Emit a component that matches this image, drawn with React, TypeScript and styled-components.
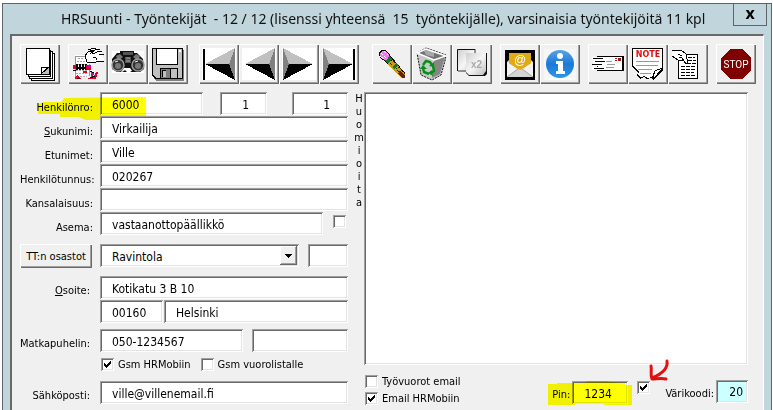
import React, { useId } from "react";
import type { ReactNode } from "react";
import styled, { createGlobalStyle } from "styled-components";

const GlobalStyle = createGlobalStyle`
  * { box-sizing: border-box; }
  body { margin: 0; background: #fff; }
`;

const formFont = `"DejaVu Sans Condensed", "DejaVu Sans", sans-serif`;
const sunken = `inset 1px 1px #a0a0a0, inset -1px -1px #fff, inset 2px 2px #696969, inset -2px -2px #e3e3e3`;
const raised = `inset 1px 1px #fff, inset -1px -1px #696969, inset -2px -2px #a0a0a0`;

const Window = styled.main`
  display: flex;
  flex-direction: column;
  min-height: calc(100vh - 3px);
  margin: 3px 1px 0 2px;
  padding: 0 7px;
  background: #c1d5dc;
  border: 1px solid #5f666b;
  border-bottom: 0;
  font-family: ${formFont};
  font-size: 12px;
  color: #000;
`;

const TitleBar = styled.header`
  display: flex;
  align-items: flex-start;
  height: 30px;
  padding-left: 51px;
`;

const Title = styled.h1`
  flex: 1;
  min-width: 0;
  margin: 0;
  font: 400 14px/30px "Noto Sans", sans-serif;
  color: #111;
  white-space: pre;
`;

const CloseButton = styled.button`
  flex: none;
  width: 34px;
  height: 22px;
  margin-right: -3px;
  padding: 0 0 4px;
  border: 1px solid #5f666b;
  border-top: 0;
  background: transparent;
  font: 700 16px/16px "Open Sans", sans-serif;
`;

const Client = styled.div`
  flex: 1;
  display: flex;
  flex-direction: column;
  gap: 8px;
  padding: 8px 15px 6px 8px;
  background: #f0f0f0;
  border: solid #696969;
  border-width: 2px 0 0 2px;
  border-right: 1px solid #fff;
`;

const Toolbar = styled.nav`
  display: flex;
`;

const ToolGroup = styled.div<{ $before?: number }>`
  display: flex;
  margin-left: ${(p) => p.$before ?? 0}px;
`;

const ToolButton = styled.button`
  width: 40px;
  height: 40px;
  padding: 0;
  border: 0;
  background: #f0f0f0;
  box-shadow: ${raised};
  svg { display: block; }
`;

const Columns = styled.div`
  flex: 1;
  display: flex;
`;

const Form = styled.form`
  display: flex;
  flex-direction: column;
  gap: 1px;
  width: 328px;
`;

const Row = styled.div<{ $before?: number }>`
  position: relative;
  display: flex;
  height: 23px;
  margin-top: ${(p) => p.$before ?? 0}px;
`;

const RowLabel = styled.label<{ $inset?: boolean }>`
  width: 80px;
  padding: ${(p) => (p.$inset ? "7px 10px" : "8px 7px")} 0 0;
  font-size: 11px;
  line-height: 16px;
  text-align: right;
  white-space: nowrap;
`;

const Field = styled.input<{ $width?: number; $before?: number; $align?: string; $tint?: string }>`
  flex: ${(p) => (p.$width ? `0 0 ${p.$width}px` : "1 1 0")};
  min-width: 0;
  height: 23px;
  margin: 0 0 0 ${(p) => p.$before ?? 0}px;
  padding: 4px ${(p) => (p.$align ? 18 : 4)}px 2px 12px;
  border: 0;
  border-radius: 0;
  background: ${(p) => p.$tint ?? "#fff"};
  box-shadow: ${sunken};
  font: 12px/16px ${formFont};
  text-align: ${(p) => p.$align ?? "left"};
`;

const CodeField = styled(Field)`
  padding: 3px 5px 2px;
`;

const DepartmentButton = styled.button`
  width: 72px;
  height: 24px;
  margin-right: 8px;
  padding: 2px 0 0;
  border: 0;
  background: #f0f0f0;
  box-shadow: ${raised};
  font: 11px/16px ${formFont};
  white-space: nowrap;
`;

const SelectBox = styled.div`
  display: grid;
  width: 199px;
  margin-right: 9px;
  > * { grid-area: 1 / 1; }
  svg { justify-self: end; margin: 2px; pointer-events: none; }
`;

const Select = styled.select`
  appearance: none;
  height: 23px;
  padding: 4px 20px 2px 12px;
  border: 0;
  border-radius: 0;
  background: #fff;
  box-shadow: ${sunken};
  font: 12px/16px ${formFont};
`;

const CheckLabel = styled.label`
  display: flex;
  gap: 4px;
  font-size: 11px;
  line-height: 14px;
  white-space: nowrap;
`;

const CheckFrame = styled.span`
  display: grid;
  width: 13px;
  height: 13px;
  > * { grid-area: 1 / 1; }
  svg { pointer-events: none; }
`;

const CheckInput = styled.input`
  appearance: none;
  width: 13px;
  height: 13px;
  margin: 0;
  background: #fff;
  box-shadow: ${sunken};
  & + svg { visibility: hidden; }
  &:checked + svg { visibility: visible; }
`;

const CheckRow = styled.div`
  display: flex;
  gap: 10px;
  margin: 5px 0 8px 81px;
`;

const LoneCheck = styled.div<{ $x: number; $y: number }>`
  padding: ${(p) => p.$y}px 0 0 ${(p) => p.$x}px;
`;

const NotesLabel = styled.label`
  width: 16px;
  padding-left: 6px;
  font: 11px/13px "DejaVu Sans Condensed", sans-serif;
  text-align: center;
  span { display: block; }
`;

const RightPane = styled.section`
  flex: 1;
  display: flex;
  flex-direction: column;
  gap: 10px;
`;

const Notes = styled.textarea`
  flex: 1;
  width: 100%;
  padding: 6px;
  border: 0;
  background: #fff;
  box-shadow: ${sunken};
  resize: none;
  font: 12px/16px ${formFont};
`;

const Footer = styled.div`
  display: flex;
  align-items: flex-start;
  height: 29px;
`;

const CheckStack = styled.div`
  display: flex;
  flex-direction: column;
  gap: 3px;
  margin: 0 auto 0 1px;
`;

const PinGroup = styled.div`
  position: relative;
  display: flex;
  padding-top: 6px;
`;

const FooterLabel = styled.label`
  padding: 6px 2px 0 0;
  font-size: 11px;
  line-height: 16px;
`;

const ColorGroup = styled.div`
  display: flex;
  padding: 5px 0 0 15px;
`;

/* Marker strokes drawn over the form */
const Marker = styled.svg<{ $left: number; $top: number }>`
  position: absolute;
  left: ${(p) => p.$left}px;
  top: ${(p) => p.$top}px;
  mix-blend-mode: multiply;
  pointer-events: none;
`;

function Icon({ children, crisp = true }: { children: ReactNode; crisp?: boolean }) {
  return (
    <svg width="40" height="40" viewBox="0 0 40 40" shapeRendering={crisp ? "crispEdges" : "auto"} aria-hidden="true">
      {children}
    </svg>
  );
}

function Check({ label, checked, name }: { label?: string; checked?: boolean; name: string }) {
  return (
    <CheckLabel>
      <CheckFrame>
        <CheckInput type="checkbox" defaultChecked={checked} aria-label={name} />
        <svg width="13" height="13" viewBox="0 0 13 13" shapeRendering="crispEdges">
          <path d="M3 5h1v1h1v1h1v-1h1v-1h1v-1h1v-1h1v3h-1v1h-1v1h-1v1h-1v1h-1v-1h-1v-1h-1z" />
        </svg>
      </CheckFrame>
      {label}
    </CheckLabel>
  );
}

const NewIcon = () => (
  <Icon>
    <path d="M11 9h24v28H11zM9 7h24v28H9z" fill="#000" />
    <path d="M10 8h22v26H10zM33 10h1v26H12v-1h21z" fill="#fff" />
    <path d="M8 6h23v27H8z" fill="#000" />
    <path d="M9 7h21v25H9z" fill="#fff" />
    <path d="M6 4h24v27H6z" fill="#000" />
    <path d="M7 5h22v25H7z" fill="#fff" />
    <path d="M21 23h8v7h-8z" fill="#c0c0c0" />
    <path d="M21 23h8l-8 7z" fill="#fff" />
    <path d="M21 30v-7h8M21 30l8-7" fill="none" stroke="#000" />
  </Icon>
);

const BindIcon = () => (
  <Icon>
    <path d="M7 11h15v10l-2 12H6z" fill="#fff" />
    <path d="M7 33V12h11M21 20v12" fill="none" stroke="#999" />
    <path d="M10 14h5M9 17h8M9 20h9M8 26h11M8 29h11M9 32h10" stroke="#aaa" strokeDasharray="2 1" />
    <path d="M16 13l3-3 1-3 4-1 4-2 4 1 2 3 2 8-4 2h-8l-4 1-4-2z" fill="#fff" />
    <path d="M17 12l3-4 5-2 1 1-4 3M20 6l6-2 2 1M22 8l8-3 2 1M24 10l8-3 2 1M17 12l2 6 5 1 4-1 8-1M25 13l3 1 1 2M31 10h5" fill="none" stroke="#000" />
    <path d="M6 24h14M9 20v6M12 20v6M15 20v6M18 20v6" stroke="#000" strokeWidth="1.5" />
    <path d="M5 21h3v4H5zM18 21h5v5h-5zM6 34l4-3 3 4h-6zM19 35l7-3 2-4h2l-2 7zM15 27h4v2h-4z" fill="#e40020" />
    <path d="M20 21h3v3h-3zM23 28l4 2-4 3z" fill="#d000b8" />
    <path d="M5 26l3 1M9 34h3M22 34l5-2M22 27l4 2" stroke="#000" />
  </Icon>
);

const SearchIcon = () => (
  <Icon crisp={false}>
    <path d="M4 7h32v22H4z" fill="#fff" shapeRendering="crispEdges" />
    <path d="M4 15l5-6h3V7h14v2h3l6 6 1 10-4 3h-7l-3-4h-6l-3 4H9l-5-3z" fill="#111" />
    <path d="M8 12l4-2 3 3-5 4zM32 12l-4-2-3 3 5 4z" fill="#777" />
    <path d="M15 8h10v3H15zM17 13h6v6h-6z" fill="#555" />
    <path d="M18 14h4M18 17h4" stroke="#aaa" />
    <circle cx="10" cy="21" r="6" fill="#333" stroke="#999" strokeWidth="1.5" />
    <circle cx="30" cy="21" r="6" fill="#333" stroke="#999" strokeWidth="1.5" />
    <circle cx="10" cy="22" r="3" fill="#777" />
    <circle cx="30" cy="22" r="3" fill="#777" />
    <path d="M7 18l3-1M27 18l3-1" stroke="#eee" />
    <path d="M14 28l3-2 2 2zM22 28l3-2 2 2z" fill="#111" />
  </Icon>
);

const SaveIcon = () => (
  <Icon>
    <path d="M6 6h30v31H8l-2-2z" fill="#808080" />
    <path d="M4 4h31v31H7l-3-3z" fill="#000" />
    <path d="M5 5h29v29H8l-3-3z" fill="#c0c0c0" />
    <path d="M8 4h22v17H8z" fill="#000" />
    <path d="M9 5h20v15H9zM31 6h2v2h-2z" fill="#fff" />
    <path d="M12 24h18v10H12z" fill="#000" />
    <path d="M13 25h9v9h-9z" fill="#808080" />
    <path d="M14 26h4v7h-4z" fill="#000" />
    <path d="M15 27h3v6h-3zM23 25h6v9h-6z" fill="#c0c0c0" />
  </Icon>
);

function ArrowIcon({ right, end }: { right?: boolean; end?: boolean }) {
  return (
    <Icon>
      <path d="M3 4h34v32H3z" fill="#fff" />
      {right ? (
        <>
          <path d="M4 4l30 16-24 1z" fill="#c0c0c0" />
          <path d="M4 36l30-16H10z" fill="#000" />
          <path d="M4 4l6 16-6 16z" fill="#808080" />
        </>
      ) : (
        <>
          <path d="M36 4L6 20l24 1z" fill="#c0c0c0" />
          <path d="M36 36L6 20h24z" fill="#000" />
          <path d="M36 4l-6 16 6 16z" fill="#808080" />
        </>
      )}
      {end && <path d={right ? "M34 5h2v31h-2z" : "M4 5h2v31H4z"} fill="#000" />}
    </Icon>
  );
}

const EraserIcon = () => (
  <Icon>
    <path d="M7 9l2-3h4l5 5 15 18v5h-4L13 17l-5-3z" fill="#000" />
    <path d="M18 17l3-1 12 14v4h-4L16 20z" fill="#c89a1c" />
    <path d="M18 19l14 13M21 17l12 13" stroke="#3c2808" strokeDasharray="1 1" />
    <path d="M28 27l5 5v2h-3l-4-5z" fill="#6a1c08" />
    <path d="M13 17l4-5 3 3-4 5zM20 23l4-4 2 2-4 4z" fill="#167a24" />
    <path d="M8 9l2-2h3l4 4-1 4-3 1-4-2z" fill="#f07cf0" />
    <path d="M9 9l5 5M12 7l4 4M8 12l4 3" stroke="#fff" strokeDasharray="1 1" />
  </Icon>
);

const TrashIcon = () => (
  <Icon crisp={false}>
    <path d="M5 9l9-5 20 7-1 6-4 14-9 5-11-5z" fill="#c8c8c8" stroke="#111" strokeWidth="1" strokeDasharray="2 1" />
    <path d="M6 9l8-4 19 7-11 4z" fill="#747474" />
    <path d="M12 7l3-2 7 3v5l-8-2z" fill="#a8a8a8" />
    <path d="M5 9l9-4 20 7-12 4z" fill="none" stroke="#fff" strokeWidth="1.5" />
    <path d="M22 17l11-4-5 17-8 4z" fill="#858585" />
    <path d="M11 21l3-4 4 1 2 3M21 22l1 5-3 2M17 30l-5-2-1-4" fill="none" stroke="#079018" strokeWidth="2.5" />
    <path d="M17 22l5 1V18zM20 26l-4 3 5 3zM8 25l3-4 4 4z" fill="#079018" />
  </Icon>
);

const CopyIcon = () => (
  <Icon crisp={false}>
    <defs>
      <linearGradient id="sheet" x1="0" y1="0" x2="1" y2="1">
        <stop offset="0" stopColor="#cfcfcf" />
        <stop offset="0.5" stopColor="#f6f6f6" />
        <stop offset="1" stopColor="#bdbdbd" />
      </linearGradient>
    </defs>
    <path d="M6 6h17v22H6z" fill="url(#sheet)" />
    <path d="M5.500 27V5.500H23" fill="none" stroke="#111" />
    <path d="M6 27h8M23 5v5" stroke="#333" />
    <path d="M15 9h20v21l-2 2H17l-3-3z" fill="#111" />
    <path d="M14 9h20v18l-3 4H17l-3-3z" fill="url(#sheet)" />
    <text x="19" y="24" fontSize="10" fontFamily="Liberation Sans, sans-serif" fontWeight="700" fill="#aaa">x2</text>
  </Icon>
);

const MailIcon = () => (
  <Icon crisp={false}>
    <path d="M5 6h30v30H5z" fill="#000" shapeRendering="crispEdges" />
    <path d="M7 18l6-6h14l6 6v15H7z" fill="#e4e4e4" />
    <path d="M9 9h22v10l-11 8-11-8z" fill="#e5b31b" />
    <path d="M9 9h22v4H9z" fill="#f2c93c" />
    <path d="M7 18l13 9 13-9v15H7z" fill="#f2f2f2" />
    <path d="M7 33l11-9h4l11 9z" fill="#d5d5d5" />
    <path d="M9 19l11 7 11-7V9H9z" fill="#dfaa14" />
    <path d="M7 33l11-8M33 33l-11-8" stroke="#aaa" />
    <text x="20" y="20" textAnchor="middle" fontSize="12" fontFamily="Liberation Sans, sans-serif" fill="#fff">@</text>
  </Icon>
);

const InfoIcon = () => (
  <Icon crisp={false}>
    <defs>
      <linearGradient id="ball" x1="0" y1="0" x2="0" y2="1">
        <stop offset="0" stopColor="#57a4e8" />
        <stop offset="0.5" stopColor="#1d78d6" />
        <stop offset="1" stopColor="#2b97f0" />
      </linearGradient>
    </defs>
    <path d="M4 5h32v31H4z" fill="#f6f6f6" />
    <ellipse cx="20" cy="35" rx="15" ry="1" fill="#fff" />
    <circle cx="20" cy="20" r="14" fill="url(#ball)" />
    <circle cx="20" cy="12" r="3" fill="#fff" />
    <path d="M16 17h7v10h2v3h-9v-3h2v-7h-2z" fill="#fff" />
  </Icon>
);

const LetterIcon = () => (
  <Icon>
    <path d="M9 12h27v15H9z" fill="#000" />
    <path d="M10 13h24v13H10z" fill="#fff" />
    <path d="M4 14.500h10M6 17.500h12M5 20.500h10M4 24.500h12" stroke="#fff" strokeWidth="3" />
    <path d="M5 14.500h10M7 17.500h10M4 20.500h10M6 24.500h10" stroke="#000" />
    <path d="M18 17.500h6M19 20.500h8M18 23.500h8" stroke="#999" />
    <path d="M27 14h2v1h-2zM30 14h3v3h-3zM27 16h2v1h-2z" fill="#a01818" />
  </Icon>
);

const NoteIcon = () => (
  <Icon>
    <path d="M4 4h31v22l-9 10-3-2-4 1-3-2-4 2-3-3 1-4-6-5z" fill="#000" />
    <path d="M5 5h29v19l-7 2-3 7-4 1-4-2-3 1-3-2 1-3-6-6z" fill="#fff" />
    <path d="M8 17.500h23M8 21.500h22M10 25.500h14M12 29.500h11" stroke="#999" />
    <path d="M27 27l6-2-7 9z" fill="#fff" />
    <text x="20" y="13" textAnchor="middle" fontSize="8" fontFamily="DejaVu Sans, sans-serif" fontWeight="700" fill="#e01010">NOTE</text>
  </Icon>
);

const DocumentIcon = () => (
  <Icon>
    <path d="M10.500 10.500h19v24h-19z" fill="#fff" stroke="#000" />
    <path d="M20 13.500h7M20 16.500h8M19 19.500h9M13 22.500h14M13 25.500h15M13 28.500h13M13 31.500h14" stroke="#000" strokeDasharray="4 1" />
    <path d="M4 6h10l5 5 1 8-2 2-4-6-3 1-7-4z" fill="#fff" />
    <path d="M4 6h9l5 4 2 9-2 1-4-6-3-1M4 12l6 4h5M10 10l4 2" fill="none" stroke="#000" />
  </Icon>
);

const StopIcon = () => (
  <Icon>
    <path d="M14 5h12l9 9v12l-9 9H14l-9-9V14z" fill="#800000" />
    <text x="20" y="24" textAnchor="middle" fontSize="10" fontFamily="Roboto, sans-serif" fill="#fff">STOP</text>
  </Icon>
);

const toolGroups: { before: number; tools: [string, ReactNode][] }[] = [
  { before: 0, tools: [["Uusi", <NewIcon />]] },
  { before: 8, tools: [["Kortisto", <BindIcon />], ["Etsi", <SearchIcon />], ["Tallenna", <SaveIcon />]] },
  {
    before: 11,
    tools: [
      ["Ensimmäinen", <ArrowIcon end />],
      ["Edellinen", <ArrowIcon />],
      ["Seuraava", <ArrowIcon right />],
      ["Viimeinen", <ArrowIcon right end />],
    ],
  },
  { before: 13, tools: [["Tyhjennä", <EraserIcon />], ["Poista", <TrashIcon />], ["Kopioi", <CopyIcon />]] },
  { before: 8, tools: [["Sähköposti", <MailIcon />], ["Tietoja", <InfoIcon />]] },
  { before: 8, tools: [["Kirje", <LetterIcon />], ["Muistio", <NoteIcon />], ["Asiakirja", <DocumentIcon />]] },
  { before: 8, tools: [["Lopeta", <StopIcon />]] },
];

export default function App() {
  const id = useId();
  return (
    <>
      <GlobalStyle />
      <Window>
        <TitleBar>
          <Title>{"HRSuunti - Työntekijät  - 12 / 12 (lisenssi yhteensä  15  työntekijälle), varsinaisia työntekijöitä 11 kpl"}</Title>
          <CloseButton aria-label="Sulje">x</CloseButton>
        </TitleBar>
        <Client>
          <Toolbar>
            {toolGroups.map((group, i) => (
              <ToolGroup key={i} $before={group.before}>
                {group.tools.map(([name, icon]) => (
                  <ToolButton key={name} aria-label={name}>{icon}</ToolButton>
                ))}
              </ToolGroup>
            ))}
          </Toolbar>
          <Columns>
            <Form>
              <Row>
                <RowLabel htmlFor={id + "no"}>Henkilönro:</RowLabel>
                <Field id={id + "no"} $width={103} defaultValue="6000" />
                <Field aria-label="Yritys" $width={47} $before={17} $align="right" defaultValue="1" />
                <Field aria-label="Yksikkö" $before={25} $align="right" defaultValue="1" />
                <Marker $left={18} $top={4} width="108" height="25" viewBox="0 0 108 25">
                  <path d="M0 8l6-2h18l2-4L108 1v21H72l-1 2H48l-8-3H22v-3H0z" fill="#ff0" />
                </Marker>
              </Row>
              <Row>
                <RowLabel htmlFor={id + "sn"}><u>S</u>ukunimi:</RowLabel>
                <Field id={id + "sn"} defaultValue="Virkailija" />
              </Row>
              <Row>
                <RowLabel htmlFor={id + "en"}>Etunimet:</RowLabel>
                <Field id={id + "en"} defaultValue="Ville" />
              </Row>
              <Row>
                <RowLabel htmlFor={id + "ht"}>Henkilötunnus:</RowLabel>
                <Field id={id + "ht"} defaultValue="020267" />
              </Row>
              <Row>
                <RowLabel htmlFor={id + "ka"}>Kansalaisuus:</RowLabel>
                <Field id={id + "ka"} />
              </Row>
              <Row>
                <RowLabel htmlFor={id + "as"}>Asema:</RowLabel>
                <Field id={id + "as"} $width={223} defaultValue="vastaanottopäällikkö" />
                <LoneCheck $x={10} $y={3}><Check name="Asema valittu" /></LoneCheck>
              </Row>
              <Row $before={8}>
                <DepartmentButton type="button">TT:n osastot</DepartmentButton>
                <SelectBox>
                  <Select aria-label="Osasto" defaultValue="Ravintola">
                    <option>Ravintola</option>
                  </Select>
                  <svg width="17" height="19" viewBox="0 0 17 19" shapeRendering="crispEdges">
                    <path d="M0 0h17v19H0z" fill="#696969" />
                    <path d="M0 0h16v18H0z" fill="#fff" />
                    <path d="M1 1h15v17H1z" fill="#a0a0a0" />
                    <path d="M1 1h14v16H1z" fill="#f0f0f0" />
                    <path d="M5 8h7v1h-1v1h-1v1H9v1H8v-1H7v-1H6V9H5z" />
                  </svg>
                </SelectBox>
                <Field aria-label="Osaston numero" />
              </Row>
              <Row $before={8}>
                <RowLabel htmlFor={id + "os"} $inset><u>O</u>soite:</RowLabel>
                <Field id={id + "os"} defaultValue="Kotikatu 3 B 10" />
              </Row>
              <Row>
                <RowLabel as="span" />
                <Field aria-label="Postinumero" $width={63} defaultValue="00160" />
                <Field aria-label="Postitoimipaikka" $before={1} defaultValue="Helsinki" />
              </Row>
              <Row $before={5}>
                <RowLabel htmlFor={id + "mp"} $inset>Matkapuhelin:</RowLabel>
                <Field id={id + "mp"} $width={143} defaultValue="050-1234567" />
                <Field aria-label="Puhelin 2" $before={9} />
              </Row>
              <CheckRow>
                <Check name="Gsm HRMobiin" label="Gsm HRMobiin" checked />
                <Check name="Gsm vuorolistalle" label="Gsm vuorolistalle" />
              </CheckRow>
              <Row>
                <RowLabel htmlFor={id + "sp"} $inset>Sähköposti:</RowLabel>
                <Field id={id + "sp"} defaultValue="ville@villenemail.fi" />
              </Row>
            </Form>
            <NotesLabel htmlFor={id + "notes"} aria-label="Huomioita">
              {"Huomioita".split("").map((letter, i) => <span key={i}>{letter}</span>)}
            </NotesLabel>
            <RightPane>
              <Notes id={id + "notes"} />
              <Footer>
                <CheckStack>
                  <Check name="Työvuorot email" label="Työvuorot email" />
                  <Check name="Email HRMobiin" label="Email HRMobiin" checked />
                </CheckStack>
                <PinGroup>
                  <FooterLabel htmlFor={id + "pin"}>Pin:</FooterLabel>
                  <Field id={id + "pin"} $width={56} defaultValue="1234" />
                  <LoneCheck $x={9} $y={0}><Check name="Pin käytössä" checked /></LoneCheck>
                  <Marker $left={-4} $top={5} width="85" height="25" viewBox="0 0 85 25">
                    <path d="M0 4h9V3h27l3-2h20l3 1 15 1v2h7v20H57l-2-1H27v1H0z" fill="#ff0" />
                  </Marker>
                  <Marker $left={94} $top={-18} width="30" height="28" viewBox="0 0 30 28">
                    <path d="M21 4c1 7-5 13-15 17M5 9c1 4-1 8 1 13 5 0 9-1 14 0" fill="none" stroke="#f01010" strokeWidth="3" strokeLinecap="round" strokeLinejoin="round" />
                  </Marker>
                </PinGroup>
                <ColorGroup>
                  <FooterLabel htmlFor={id + "color"}>Värikoodi:</FooterLabel>
                  <CodeField id={id + "color"} $width={32} $align="right" $tint="#ccffff" defaultValue="20" />
                </ColorGroup>
              </Footer>
            </RightPane>
          </Columns>
        </Client>
      </Window>
    </>
  );
}
